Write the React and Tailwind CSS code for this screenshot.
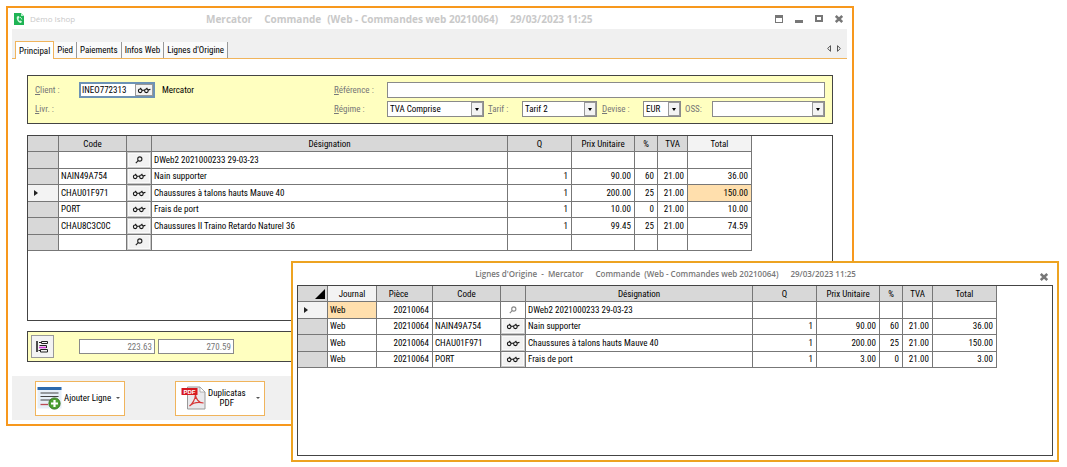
import React from "react";

function Glasses() {
  return (
    <svg viewBox="0 0 14 8" className="h-2 w-3.5 shrink-0" fill="none" stroke="#111" strokeWidth="1.1" aria-hidden="true">
      <circle cx="3.2" cy="4.8" r="1.8" />
      <circle cx="9.4" cy="4.8" r="1.8" />
      <path d="M5 4.3H7.6M11 4L13.4 3.4M3.2 3L4.2 1.8M9.4 3L10.4 1.8" />
    </svg>
  );
}

function Lens({ muted }) {
  return (
    <svg viewBox="0 0 8 8" className="h-2 w-2 shrink-0" fill="none" stroke={muted ? "#888" : "#222"} strokeWidth="1.1" aria-hidden="true">
      <circle cx="4.8" cy="3" r="2.1" />
      <path d="M3.2 4.6L0.8 7.2" />
    </svg>
  );
}

function Cross() {
  return (
    <svg viewBox="0 0 8 8" className="h-2 w-2" stroke="#777" strokeWidth="2.5" aria-hidden="true">
      <path d="M0.8 1L7.2 7M7.2 1L0.8 7" />
    </svg>
  );
}

function RowArrow() {
  return (
    <svg viewBox="0 0 4 6" className="ml-1.5 block h-1.5 w-1" aria-hidden="true">
      <path d="M0 0L4 3L0 6Z" fill="#222" />
    </svg>
  );
}

function Select({ id, value, className }) {
  return (
    <div className={"relative h-4 border border-[#8a8a8a] bg-white " + className}>
      <select id={id} defaultValue={value} className="block h-full w-full appearance-none bg-transparent pl-0.5 pr-3 leading-3 text-black outline-none">
        <option>{value}</option>
      </select>
      <span className="pointer-events-none absolute inset-y-0 right-0 flex w-3 items-center justify-center border border-[#999] bg-[#f3f3f3]">
        <svg viewBox="0 0 4 3" className="h-[3px] w-1" aria-hidden="true"><path d="M0 0H4L2 3Z" fill="#000" /></svg>
      </span>
    </div>
  );
}

const COLUMNS = {
  mark: { label: "", width: "w-[31px]" },
  mark2: { label: "", width: "w-[30px]", corner: true },
  journal: { label: "Journal", width: "w-[49px]" },
  piece: { label: "Pièce", width: "w-[56px]", right: true, headPad: "pr-3" },
  code: { label: "Code", width: "w-[68px]" },
  icon: { label: "", width: "w-[25px]" },
  name: { label: "Désignation", width: "" },
  q: { label: "Q", width: "w-[64px]", right: true },
  price: { label: "Prix Unitaire", width: "w-[63px]", right: true },
  pct: { label: "%", width: "w-[23px]", right: true },
  tva: { label: "TVA", width: "w-[30px]", right: true },
  total: { label: "Total", width: "w-[64px]", right: true },
};

function Grid({ columns, rows, current, highlight, height, label }) {
  return (
    <table aria-label={label} className={"w-full table-fixed border-separate border-spacing-0 leading-3 text-black " + height}>
      <thead>
        <tr className="h-4">
          {columns.map((key) => {
            const c = COLUMNS[key];
            return (
              <th key={key} scope="col" className={`border-b border-r border-[#777] p-0 text-center font-normal ${c.width} ${c.headPad || ""} ${key === highlight ? "bg-[#f3f3f3]" : "bg-[#d8d8d8]"}`}>
                {c.corner ? (
                  <svg viewBox="0 0 10 10" className="ml-auto mr-0.5 block h-2.5 w-2.5" aria-hidden="true"><path d="M10 0V10H0Z" fill="#000" /></svg>
                ) : c.label}
              </th>
            );
          })}
        </tr>
      </thead>
      <tbody>
        {rows.map((row, i) => (
          <tr key={i}>
            {columns.map((key) => {
              const c = COLUMNS[key];
              if (key === "mark" || key === "mark2")
                return <td key={key} className={"border-b border-r border-[#777] p-0 " + (i === current ? "bg-[#f3f3f3]" : "bg-[#d8d8d8]")}>{i === current && <RowArrow />}</td>;
              if (key === "icon")
                return (
                  <td key={key} className={"border-b border-r border-[#777] p-0 " + (row.icon === "muted" ? "bg-white" : "bg-[#c8c8c8]")}>
                    <button type="button" aria-label={row.icon ? "Rechercher" : "Voir l'article"} className={"mx-auto flex h-3.5 w-[22px] items-center justify-center " + (row.icon === "muted" ? "bg-white" : "border border-[#fafafa] bg-[#f2f2f2]")}>
                      {row.icon ? <Lens muted={row.icon === "muted"} /> : <Glasses />}
                    </button>
                  </td>
                );
              const lit = i === current && key === highlight;
              return (
                <td key={key} className={`overflow-hidden whitespace-nowrap border-b border-r border-[#777] py-0 pl-0.5 ${c.right ? "pr-[3px] text-right" : "text-left"} ${lit ? "bg-[#ffdfad]" : "bg-white"}`}>
                  {row[key]}
                </td>
              );
            })}
          </tr>
        ))}
      </tbody>
    </table>
  );
}

const ORDER_ROWS = [
  { icon: "lens", name: "DWeb2 2021000233 29-03-23" },
  { code: "NAIN49A754", name: "Nain supporter", q: "1", price: "90.00", pct: "60", tva: "21.00", total: "36.00" },
  { code: "CHAU01F971", name: "Chaussures à talons hauts Mauve 40", q: "1", price: "200.00", pct: "25", tva: "21.00", total: "150.00" },
  { code: "PORT", name: "Frais de port", q: "1", price: "10.00", pct: "0", tva: "21.00", total: "10.00" },
  { code: "CHAU8C3C0C", name: "Chaussures II Traino Retardo Naturel 36", q: "1", price: "99.45", pct: "25", tva: "21.00", total: "74.59" },
  { icon: "lens" },
];

const ORIGIN_ROWS = [
  { icon: "muted", name: "DWeb2 2021000233 29-03-23" },
  { code: "NAIN49A754", name: "Nain supporter", q: "1", price: "90.00", pct: "60", tva: "21.00", total: "36.00" },
  { code: "CHAU01F971", name: "Chaussures à talons hauts Mauve 40", q: "1", price: "200.00", pct: "25", tva: "21.00", total: "150.00" },
  { code: "PORT", name: "Frais de port", q: "1", price: "3.00", pct: "0", tva: "21.00", total: "3.00" },
].map((row) => ({ journal: "Web", piece: "20210064", ...row }));

const TABS = ["Principal", "Pied", "Paiements", "Infos Web", "Lignes d'Origine"];

function TitleBar() {
  return (
    <header className="flex h-[21px] items-center pl-1.5 pr-[9px] font-['Open_Sans',sans-serif] text-[#c9c9c9]">
      <svg viewBox="0 0 10 12" className="h-3 w-2.5" aria-hidden="true">
        <path d="M0 0H7L10 3V12H0Z" fill="#1fb455" />
        <path d="M7 0L10 3H7Z" fill="#b9efcb" />
        <path d="M3 3.5C2 6 4 9.5 7 10L8 8.5L6.5 7.5L5.7 8.1C4.8 7.4 4.4 6.4 4.5 5.4L5.5 5L5 3Z" fill="#d7f9e2" />
        <path d="M6 4.2Q7.6 4.8 7.8 6.5" stroke="#d7f9e2" fill="none" strokeWidth=".8" />
      </svg>
      <span className="ml-1.5 w-44 text-[8px]">Démo Ishop</span>
      <h1 className="flex flex-1 gap-3 whitespace-nowrap text-[10px] font-bold">
        <span>Mercator</span>
        <span className="flex gap-1.5"><span>Commande</span><span>(Web - Commandes web 20210064)</span></span>
        <span>29/03/2023 11:25</span>
      </h1>
      <div className="flex items-center gap-3">
        <button type="button" aria-label="Réduire dans la barre" className="h-2 w-2 border border-t-[3px] border-[#777]" />
        <button type="button" aria-label="Réduire" className="flex h-2 w-2 items-end"><span className="h-[3px] w-full bg-[#777]" /></button>
        <button type="button" aria-label="Agrandir" className="h-[7px] w-2 border-2 border-[#777]" />
        <button type="button" aria-label="Fermer"><Cross /></button>
      </div>
    </header>
  );
}

function Tabs() {
  return (
    <nav className="ml-1 mr-[5px] flex h-[30px] items-end border-b border-[#f0b45c] bg-[#f0f0f0]">
      <div role="tablist" className="flex flex-1 items-end pl-[3px]">
        {TABS.map((tab, i) => (
          <button key={tab} type="button" role="tab" aria-selected={i === 0}
            className={i === 0
              ? "-mb-px h-[18px] border border-b-0 border-[#f0b45c] bg-white px-[3px] leading-3"
              : "h-4 border-r border-[#999] bg-[#fafafa] px-[3px] leading-3"}>
            {tab}
          </button>
        ))}
      </div>
      <div className="flex gap-1.5 pb-1.5 pr-1.5">
        <button type="button" aria-label="Onglet précédent"><svg viewBox="0 0 4 7" className="h-[7px] w-1" fill="none" stroke="#444" strokeWidth=".9"><path d="M3.5 .7V6.3L.6 3.5Z" /></svg></button>
        <button type="button" aria-label="Onglet suivant"><svg viewBox="0 0 4 7" className="h-[7px] w-1" fill="none" stroke="#444" strokeWidth=".9"><path d="M.5 .7V6.3L3.4 3.5Z" /></svg></button>
      </div>
    </nav>
  );
}

function ClientPanel() {
  return (
    <section className="mx-[19px] mt-4 flex border border-[#444] bg-[#ffffc0] px-[7px] py-1.5 text-[#777]">
      <div className="w-[299px] shrink-0">
        <div className="flex h-4 items-center">
          <label htmlFor="client" className="w-11"><u>C</u>lient :</label>
          <div className="flex h-4 w-[76px] items-stretch border-2 border-[#6d93b5] bg-white">
            <input id="client" defaultValue="INEO772313" className="w-full min-w-0 flex-1 bg-transparent pl-px text-black outline-none" />
            <button type="button" aria-label="Voir le client" className="flex w-[18px] items-center justify-center border border-[#999] bg-[#f3f3f3]"><Glasses /></button>
          </div>
          <span className="ml-[7px] text-black">Mercator</span>
        </div>
        <p className="mt-[3px] leading-4"><u>L</u>ivr. :</p>
      </div>
      <div className="flex-1 whitespace-nowrap">
        <div className="flex h-4 items-center">
          <label htmlFor="reference" className="w-[53px]"><u>R</u>éférence :</label>
          <input id="reference" className="h-4 min-w-0 flex-1 border border-[#8a8a8a] bg-white px-1 text-black outline-none" />
        </div>
        <div className="mt-[3px] flex h-4 items-center">
          <label htmlFor="regime" className="w-[53px]"><u>R</u>égime :</label>
          <Select id="regime" value="TVA Comprise" className="w-[97px]" />
          <label htmlFor="tarif" className="ml-1 w-[34px]"><u>T</u>arif :</label>
          <Select id="tarif" value="Tarif 2" className="w-[75px]" />
          <label htmlFor="devise" className="ml-[5px] w-[41px]"><u>D</u>evise :</label>
          <Select id="devise" value="EUR" className="w-[38px]" />
          <label htmlFor="oss" className="ml-1 w-[27px]">OSS:</label>
          <Select id="oss" value="" className="flex-1" />
        </div>
      </div>
    </section>
  );
}

function MainWindow() {
  return (
    <main className="ml-1.5 mr-[213px] border-2 border-[#f7981d] bg-white pb-1">
      <TitleBar />
      <Tabs />
      <ClientPanel />
      <div className="mx-[19px] mt-[11px] h-[186px] border border-[#444] bg-white pr-20">
        <Grid label="Lignes de commande" columns={["mark", "code", "icon", "name", "q", "price", "pct", "tva", "total"]}
          rows={ORDER_ROWS} current={2} highlight="total" height="h-[115px]" />
      </div>
      <section className="mx-[19px] mt-2.5 flex h-[31px] items-center border border-[#444] bg-[#ffffc0] pl-[3px]">
        <button type="button" aria-label="Totaux" className="flex h-[23px] w-[23px] items-center justify-center border border-[#999] bg-[#f3f3f3]">
          <svg viewBox="0 0 13 13" className="h-[13px] w-[13px]" fill="none" stroke="#222" aria-hidden="true">
            <path d="M1 1V12" strokeWidth="1.6" />
            <path d="M5.5 1.5H11.5V3.5H5.5ZM3 2.5H5.5M3.5 5.5H10.5V8M4.5 9.5H11.5V12H4.5ZM2.5 10.5H4.5" />
            <path d="M3 7.5H10" stroke="#d43bd8" strokeWidth="1.6" />
          </svg>
        </button>
        <input aria-label="Total HTVA" readOnly defaultValue="223.63" className="ml-[25px] h-[15px] w-[76px] border border-[#8a8a8a] bg-white pr-0.5 text-right text-[#777]" />
        <input aria-label="Total TVAC" readOnly defaultValue="270.59" className="ml-[3px] h-[15px] w-[76px] border border-[#8a8a8a] bg-white pr-0.5 text-right text-[#777]" />
      </section>
      <footer className="ml-1 mr-[5px] mt-3.5 flex h-11 items-center gap-[50px] bg-[#f0f0f0] pl-[23px]">
        <button type="button" className="flex h-[35px] w-[90px] items-center border border-[#f0b45c] bg-white pl-px">
          <svg viewBox="0 0 25 23" className="h-[23px] w-[25px] shrink-0" aria-hidden="true">
            <rect x="0.5" y="0.5" width="24" height="21" fill="#e7eff8" />
            <path d="M.5 1.5H24.5" stroke="#2c69ad" strokeWidth="3" />
            <path d="M3.5 6H21.5M3.5 9.5H21.5M3.5 13H14" stroke="#444" strokeWidth="1.2" />
            <path d="M3.5 17.5H11" stroke="#bb4b55" strokeWidth="1.3" />
            <circle cx="17.5" cy="16.5" r="5.6" fill="#4c9f31" stroke="#35751f" />
            <path d="M17.5 13V20M14 16.5H21" stroke="#fff" strokeWidth="2.2" />
          </svg>
          <span className="ml-0.5 whitespace-nowrap">Ajouter Ligne</span>
          <svg viewBox="0 0 4 2" className="ml-auto mr-1 h-0.5 w-1" aria-hidden="true"><path d="M0 0H4L2 2Z" fill="#555" /></svg>
        </button>
        <button type="button" className="flex h-[35px] w-[90px] items-center border border-[#f0b45c] bg-white pl-[5px]">
          <svg viewBox="0 0 25 24" className="h-6 w-[25px] shrink-0" aria-hidden="true">
            <path d="M6.5 1H19L24 6V23H6.5Z" fill="#e9e9ec" stroke="#999" />
            <path d="M19 1V6H24Z" fill="#fff" stroke="#999" strokeWidth=".7" />
            <path d="M8.5 20C11 18.5 14.5 13 14.5 8.5C14.5 12 17.5 17 22.5 17C17 15.8 12 16.8 8.5 20Z" fill="none" stroke="#d63838" strokeWidth="1.2" />
            <rect x="0.5" y="2" width="16" height="7" fill="#d71920" />
            <text x="8.5" y="7.8" textAnchor="middle" fontSize="6" fontWeight="700" fontFamily="Liberation Sans, sans-serif" fill="#fff">PDF</text>
          </svg>
          <span className="ml-0.5 text-center leading-[10px]">Duplicatas<br />PDF</span>
          <svg viewBox="0 0 4 2" className="ml-auto mr-1 h-0.5 w-1" aria-hidden="true"><path d="M0 0H4L2 2Z" fill="#555" /></svg>
        </button>
      </footer>
    </main>
  );
}

function OriginWindow() {
  return (
    <section aria-label="Lignes d'Origine" className="absolute left-[291px] right-2 top-[261px] border-2 border-[#eda321] bg-white px-1 pb-1">
      <header className="flex h-[22px] items-center font-['Open_Sans',sans-serif] text-[8px] font-semibold text-[#777]">
        <h2 className="flex flex-1 justify-center gap-3 whitespace-nowrap pr-1.5">
          <span>Lignes d'Origine&nbsp; -&nbsp; Mercator</span>
          <span>Commande&nbsp; (Web - Commandes web 20210064)</span>
          <span>29/03/2023 11:25</span>
        </h2>
        <button type="button" aria-label="Fermer" className="mr-[5px] pt-1.5"><Cross /></button>
      </header>
      <div className="h-[171px] border border-[#444] pr-[55px]">
        <Grid label="Lignes d'origine" columns={["mark2", "journal", "piece", "code", "icon", "name", "q", "price", "pct", "tva", "total"]}
          rows={ORIGIN_ROWS} current={0} highlight="journal" height="h-[82px]" />
      </div>
    </section>
  );
}

export default function App() {
  return (
    <div className="relative min-h-screen bg-white pt-1.5 font-['Roboto_Condensed','Lato',sans-serif] text-[9px] leading-3 text-black">
      <MainWindow />
      <OriginWindow />
    </div>
  );
}
